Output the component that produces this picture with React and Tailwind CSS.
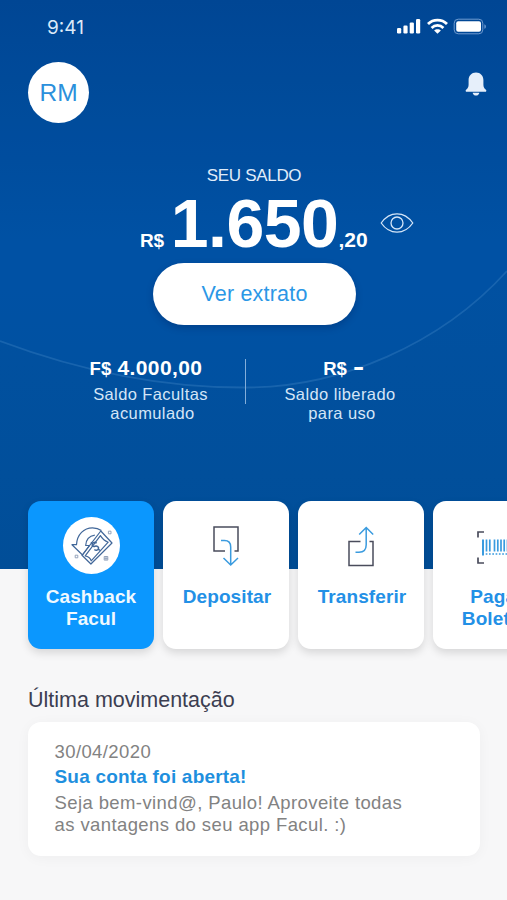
import { useState } from 'react';

const NAVY = '#4a4c5c';
const BLUE = '#3a9bdf';

function StatusBar() {
    return (
        <div className="flex h-[54px] items-center justify-between pl-[47px] pr-[20px]">
            <span className="font-['Inter',sans-serif] text-[19px] leading-none text-[#dce9f8]">9:41</span>
            <div className="flex items-center gap-[5.5px] text-white">
                <svg className="-mt-[2px]" width="25" height="16" viewBox="0 0 25 16" fill="currentColor">
                    <rect x="1" y="10" width="4.2" height="5.5" rx="1.2" />
                    <rect x="7.4" y="7.6" width="4.2" height="7.9" rx="1.2" />
                    <rect x="13.700" y="4.4" width="4.2" height="11.1" rx="1.2" />
                    <rect x="20" y="1" width="4.2" height="14.5" rx="1.2" />
                </svg>
                <svg className="-mt-[3px]" width="21" height="16" viewBox="0 0 21 16" fill="none" stroke="currentColor" strokeWidth="2.8">
                    <path d="M1 6.1C6.2.9 14.8.9 20 6.1" />
                    <path d="M4.6 9.9c3.3-3.3 8.5-3.3 11.8 0" />
                    <path d="M10.5 15.8 7.1 12.6c1.8-1.8 5-1.8 6.8 0Z" fill="currentColor" stroke="none" />
                </svg>
                <svg className="-mt-[2px]" width="34" height="17" viewBox="0 0 34 17">
                    <rect x="1.2" y="1.2" width="28.6" height="14.6" rx="4" fill="none" stroke="#6f9bd0" strokeWidth="1" />
                    <rect x="3.2" y="3.2" width="24.8" height="10.6" rx="2" fill="#fff" />
                    <path d="M31.4 6.2c2 .8 2 3.8 0 4.6Z" fill="#6f9bd0" />
                </svg>
            </div>
        </div>
    );
}

function BellIcon() {
    return (
        <svg width="22" height="24" viewBox="0 0 22 24" fill="#e6effa">
            <path d="M11 .5C6.6.5 3.6 3.7 3.6 8v4.5c0 2.5-.8 3.800-2.500 5.200-.9.8-.5 2.100.7 2.100h18.400c1.200 0 1.600-1.300.7-2.100-1.700-1.400-2.500-2.700-2.500-5.200V8C18.400 3.700 15.400.5 11 .5Z" />
            <path d="M7.700 20.700h6.600c-.3 1.800-1.500 2.900-3.300 2.900s-3-1.100-3.300-2.900Z" />
        </svg>
    );
}

function EyeIcon() {
    return (
        <svg width="34" height="22" viewBox="0 0 34 22" fill="none" stroke="#d5e6f8" strokeWidth="1.300">
            <path d="M1.200 11C5.500 4.800 10.800 1.800 17 1.800S28.500 4.800 32.800 11C28.500 17.200 23.200 20.200 17 20.200S5.500 17.200 1.200 11Z" strokeLinejoin="round" />
            <circle cx="17" cy="11" r="6" />
        </svg>
    );
}

function CashbackIcon() {
    return (
        <div className="flex size-[57px] items-center justify-center rounded-full bg-white">
            <svg width="57" height="57" viewBox="0 0 57 57" fill="none" stroke="#416799" strokeWidth="1.200" strokeLinejoin="round">
                <path d="M19.500 38 9 27.700h4.500C14 17.500 21 10.800 29.500 10.800c3.400 0 6.500 1 8.900 2.800" />
                <path d="M19.500 38 26.500 28.500h-3.800c.3-5.600 3.500-9.400 9.100-10.300" />
                <path d="M27.900 47 19 38.300 37.800 14 49 26Z" />
                <path d="M28.200 43.800c-.8-2.200-3.400-4.400-6-4.900L37.400 18.600c1.400 2.300 5 5.600 7.800 6.600Z" />
                <path d="M33.600 26.200c-1.200-1.300-3.400-1-4.200.5-.9 2 .6 3.200 2.600 2.600s4.200.5 3.400 2.500c-.6 1.700-2.700 2-4 .7M29.400 26.700l-1.400-1.500M35.400 31.900l1.400 1.500" strokeWidth="1.500" />
                <g stroke="#8a9bb5" strokeWidth=".9">
                    <rect x="45.400" y="14.200" width="2.600" height="2.600" />
                    <rect x="41.200" y="39.500" width="3.600" height="3.600" />
                    <path d="M43 39.500v3.600M41.200 41.300h3.600" />
                    <rect x="12.200" y="38.200" width="2.600" height="2.600" />
                </g>
            </svg>
        </div>
    );
}

function DepositIcon() {
    return (
        <svg width="26" height="42" viewBox="0 0 26 42" fill="none" strokeWidth="1.500">
            <path d="M12 26H1V2h24v24h-3.500" stroke={NAVY} />
            <path d="M8 15.500h3.500c4.200 0 6.200 2.200 6.200 6.500v17.500M10.500 33l7.200 7 7.300-7" stroke={BLUE} />
        </svg>
    );
}

function TransferIcon() {
    return (
        <svg width="26" height="42" viewBox="0 0 26 42" fill="none" strokeWidth="1.500">
            <path d="M12.500 16.500H1v24h24v-24h-3.500" stroke={NAVY} />
            <path d="M7.500 27.200h3.500c4.800 0 7.200-2.600 7.200-7.500V2.500M11.200 9.500l7-7 7 7" stroke={BLUE} />
        </svg>
    );
}

function BarcodeIcon() {
    return (
        <svg className="mt-[3px]" width="39" height="33" viewBox="0 0 39 33" fill="none">
            <path d="M7 1H1v5.500M1 26.500V32h6M32 1h6v5.500M38 26.500V32h-6" stroke={NAVY} strokeWidth="1.700" />
            <path d="M6 8.500v16" stroke={BLUE} strokeWidth="2" />
            <path d="M9.500 8.500v12M12.800 8.500v12M17.500 8.500v12M20.800 8.500v12M24 8.500v12M27.200 8.500v12M30.500 8.500v12M33 8.500v12" stroke={BLUE} strokeWidth="1.700" />
            <path d="M8.700 23h25" stroke={BLUE} strokeWidth="1.500" strokeDasharray="1.700 1.600" />
        </svg>
    );
}

const ACTIONS = [
    { label: ['Cashback', 'Facul'], Icon: CashbackIcon, active: true },
    { label: ['Depositar'], Icon: DepositIcon },
    { label: ['Transferir'], Icon: TransferIcon },
    { label: ['Pagar', 'Boletos'], Icon: BarcodeIcon },
];

function ActionCard({ label, Icon, active }) {
    return (
        <button
            className={`flex h-[148px] w-[126px] shrink-0 flex-col items-center rounded-[13px] shadow-[0_4px_9px_rgba(0,0,0,0.13)] ${active ? 'bg-[#0b97fe] text-[#f0f9ff]' : 'bg-white text-[#2390e6]'}`}
        >
            <span className="mt-[16px] flex h-[57px] items-center justify-center"><Icon /></span>
            <span className={`mt-[12px] text-[19px] font-bold leading-[22px] tracking-[0.1px] ${active ? '' : 'pl-[2px]'}`}>
                {label.map(line => <span key={line} className="block">{line}</span>)}
            </span>
        </button>
    );
}

function Backdrop() {
    return (
        <svg className="absolute inset-0" width="507" height="570" viewBox="0 0 507 570" fill="none">
            <path d="M0 0V341C80 371 165 388 247 387.500C340 387 440 345 507 271V0Z" fill="#0059b4" fillOpacity=".15" />
            <path d="M0 341C80 371 165 388 247 387.500C340 387 440 345 507 271" stroke="#5f9ed8" strokeOpacity=".25" strokeWidth="1.800" />
        </svg>
    );
}

export default function App() {
    const [visible, setVisible] = useState(true);

    return (
        <div className="h-[900px] w-[507px] overflow-hidden bg-[#f7f7f8] font-['Liberation_Sans',Arial,sans-serif]">
            <header className="relative h-[569px] bg-linear-to-b from-[#01448f] via-[#0151a2] via-45% to-[#014e98]">
                <Backdrop />
                <div className="relative">
                    <StatusBar />

                    <div className="flex items-start justify-between pl-[28px] pr-[20px] pt-[8px]">
                        <div className="flex size-[61px] items-center justify-center rounded-full bg-white pt-[1px] text-[24.500px] text-[#2b90dc]">RM</div>
                        <button className="mt-[10px]"><BellIcon /></button>
                    </div>

                    <section className="mt-[43px] flex flex-col items-center">
                        <h2 className="pl-[1px] text-[17px] leading-[20px] tracking-[-0.300px] text-[#e0ecf9]">SEU SALDO</h2>
                        <div className="-mt-[2px] flex h-[79px] w-full items-start pl-[140px] text-white">
                            <div className="flex items-baseline font-bold leading-[78px]">
                                <span className="text-[19px] tracking-[-0.300px]">R$</span>
                                <span className="ml-[7px] text-[68px] tracking-[-0.500px]">{visible ? '1.650' : '•••'}</span>
                                <span className="text-[21px]">{visible ? ',20' : ''}</span>
                            </div>
                            <button className="ml-[12px] mt-[28px]" onClick={() => setVisible(!visible)}><EyeIcon /></button>
                        </div>
                        <button className="ml-[2px] h-[62px] w-[203px] rounded-full bg-white pt-[1px] text-[21.500px] tracking-[0.200px] text-[#2b97e6] shadow-[0_3px_7px_rgba(0,20,70,0.25)]">
                            Ver extrato
                        </button>
                    </section>

                    <section className="mt-[32px] flex items-start pl-[85px] text-center text-[16.500px] leading-[19px] tracking-[0.400px] text-[#d4e5f7]">
                        <div className="w-[131px]">
                            <p className="-mt-[1px] pr-[9px] text-[21px] font-bold leading-[24px] text-white">
                                <span className="text-[18.500px] tracking-normal">F$</span> 4.000,00
                            </p>
                            <p className="mt-[4px]">Saldo Facultas<br /><span className="pl-[4px]">acumulado</span></p>
                        </div>
                        <div className="ml-[29px] mt-[2px] h-[45px] w-px bg-[#83aeda]" />
                        <div className="ml-[29px] w-[131px]">
                            <p className="-mt-[1px] flex items-baseline justify-center pl-[6px] text-[21px] font-bold leading-[24px] text-white">
                                <span className="text-[18.500px] tracking-normal">R$</span>
                                <span className="relative -top-[1px] ml-[6px] w-[11px] origin-left scale-x-[1.6] scale-y-[1.2] text-left">-</span>
                            </p>
                            <p className="mt-[4px] -ml-[1px]">Saldo liberado<br /><span className="pl-[4px]">para uso</span></p>
                        </div>
                    </section>
                </div>
            </header>

            <nav className="relative -mt-[68px] flex gap-[9px] pl-[28px]">
                {ACTIONS.map(action => <ActionCard key={action.label[0]} {...action} />)}
            </nav>

            <section className="px-[28px] pt-[38px]">
                <h3 className="text-[21.500px] leading-[26px] text-[#3c3e51]">Última movimentação</h3>
                <article className="mt-[9px] h-[134px] w-[452px] rounded-[13px] bg-white pl-[26.500px] pt-[19px] text-[18.500px] leading-[22px] tracking-[0.400px] text-[#828282] shadow-[0_2px_14px_rgba(0,0,0,0.04)]">
                    <p>30/04/2020</p>
                    <p className="mt-[3px] text-[19px] font-bold tracking-[0.200px] text-[#1e8fde]">Sua conta foi aberta!</p>
                    <p className="mt-[4px]">Seja bem-vind@, Paulo! Aproveite todas<br />as vantagens do seu app Facul. :)</p>
                </article>
            </section>
        </div>
    );
}
